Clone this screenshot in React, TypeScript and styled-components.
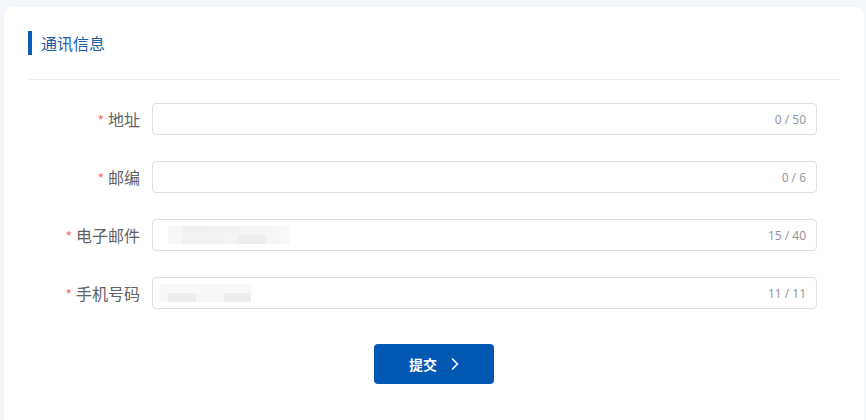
import React from 'react';
import styled, { createGlobalStyle } from 'styled-components';

const GlobalStyle = createGlobalStyle`
  html, body {
    margin: 0;
    padding: 0;
    background: #f3f7fb;
    font-family: "Noto Sans CJK SC", "Microsoft YaHei", "Liberation Sans", sans-serif;
    overflow: hidden;
  }
  #root {
    padding: 7px 2px 0 4px;
  }
`;

const Card = styled.div`
  background: #ffffff;
  border-radius: 8px 8px 0 0;
  padding: 24px 24px 0;
  box-sizing: border-box;
  height: 413px;
`;

const SectionTitle = styled.div`
  display: flex;
  align-items: center;
  height: 24px;
  border-left: 4px solid #0a5cb8;
  padding-left: 9px;
  font-size: 16px;
  color: #1d5fab;
  line-height: 24px;
`;

const Divider = styled.div`
  height: 1px;
  background: #ebeef5;
  margin: 24px 0 23px;
`;

const Form = styled.form`
  display: flex;
  flex-direction: column;
  gap: 26px;
  margin-right: 23px;
`;

const Row = styled.div`
  display: flex;
  align-items: center;
  height: 32px;
`;

const Label = styled.label`
  width: 124px;
  box-sizing: border-box;
  padding-right: 12px;
  text-align: right;
  font-size: 16px;
  color: #606266;
  line-height: 32px;
`;

const Star = styled.span`
  color: #f56c6c;
  font-size: 14px;
  margin-right: 4px;
`;

const InputBox = styled.div`
  flex: 1;
  height: 32px;
  box-sizing: border-box;
  border: 1px solid #dcdfe6;
  border-radius: 4px;
  display: flex;
  align-items: center;
  padding: 0 10px 0 15px;
`;

const Counter = styled.span`
  margin-left: auto;
  font-size: 12px;
  color: #909399;
  font-family: "Open Sans", "Liberation Sans", sans-serif;
`;

const Blur = styled.div<{ $offset: number }>`
  display: grid;
  grid-auto-flow: column;
  grid-template-rows: repeat(2, 9px);
  margin-left: ${p => p.$offset}px;
`;

const Cell = styled.span<{ $shade: string; $w: number }>`
  width: ${p => p.$w}px;
  background: ${p => p.$shade};
`;

const Actions = styled.div`
  display: flex;
  justify-content: center;
  margin-top: 35px;
`;

const SubmitButton = styled.button`
  width: 120px;
  height: 40px;
  border: none;
  border-radius: 4px;
  background: #0358b4;
  color: #ffffff;
  font-size: 14px;
  font-weight: 600;
  font-family: inherit;
  display: flex;
  align-items: center;
  justify-content: center;
  gap: 14px;
  cursor: pointer;
`;

type BlurCol = { w: number; top: string; bottom: string };

const emailBlur: BlurCol[] = [
  { w: 14, top: '#f7f7f7', bottom: '#f7f7f7' },
  { w: 14, top: '#f1f1f1', bottom: '#f1f1f1' },
  { w: 14, top: '#f1f1f1', bottom: '#f1f1f1' },
  { w: 14, top: '#f2f2f2', bottom: '#f2f2f2' },
  { w: 14, top: '#f3f3f3', bottom: '#f3f3f3' },
  { w: 14, top: '#f4f4f4', bottom: '#eeeeee' },
  { w: 14, top: '#f5f5f5', bottom: '#eeeeee' },
  { w: 14, top: '#f7f7f7', bottom: '#f6f6f6' },
  { w: 10, top: '#f9f9f9', bottom: '#f9f9f9' },
];

const phoneBlur: BlurCol[] = [
  { w: 9, top: '#f9f9f9', bottom: '#f8f8f8' },
  { w: 28, top: '#f8f8f8', bottom: '#eeeeee' },
  { w: 28, top: '#f8f8f8', bottom: '#f7f7f7' },
  { w: 27, top: '#f8f8f8', bottom: '#eeeeee' },
];

interface Field {
  label: string;
  count: string;
  blur?: BlurCol[];
  offset?: number;
}

const fields: Field[] = [
  { label: '地址', count: '0 / 50' },
  { label: '邮编', count: '0 / 6' },
  { label: '电子邮件', count: '15 / 40', blur: emailBlur, offset: 0 },
  { label: '手机号码', count: '11 / 11', blur: phoneBlur, offset: -9 },
];

const Chevron = () => (
  <svg width="8" height="12" viewBox="0 0 8 12" fill="none">
    <path d="M1.5 1 L6.5 6 L1.5 11" stroke="#ffffff" strokeWidth="1.6" strokeLinecap="round" strokeLinejoin="round" />
  </svg>
);

export default function App() {
  return (
    <>
      <GlobalStyle />
      <Card>
        <SectionTitle>通讯信息</SectionTitle>
        <Divider />
        <Form onSubmit={e => e.preventDefault()}>
          {fields.map(f => (
            <Row key={f.label}>
              <Label>
                <Star>*</Star>
                {f.label}
              </Label>
              <InputBox>
                {f.blur && (
                  <Blur $offset={f.offset ?? 0}>
                    {f.blur.map((c, i) => (
                      <React.Fragment key={i}>
                        <Cell $w={c.w} $shade={c.top} />
                        <Cell $w={c.w} $shade={c.bottom} />
                      </React.Fragment>
                    ))}
                  </Blur>
                )}
                <Counter>{f.count}</Counter>
              </InputBox>
            </Row>
          ))}
        </Form>
        <Actions>
          <SubmitButton type="button">
            提交
            <Chevron />
          </SubmitButton>
        </Actions>
      </Card>
    </>
  );
}
